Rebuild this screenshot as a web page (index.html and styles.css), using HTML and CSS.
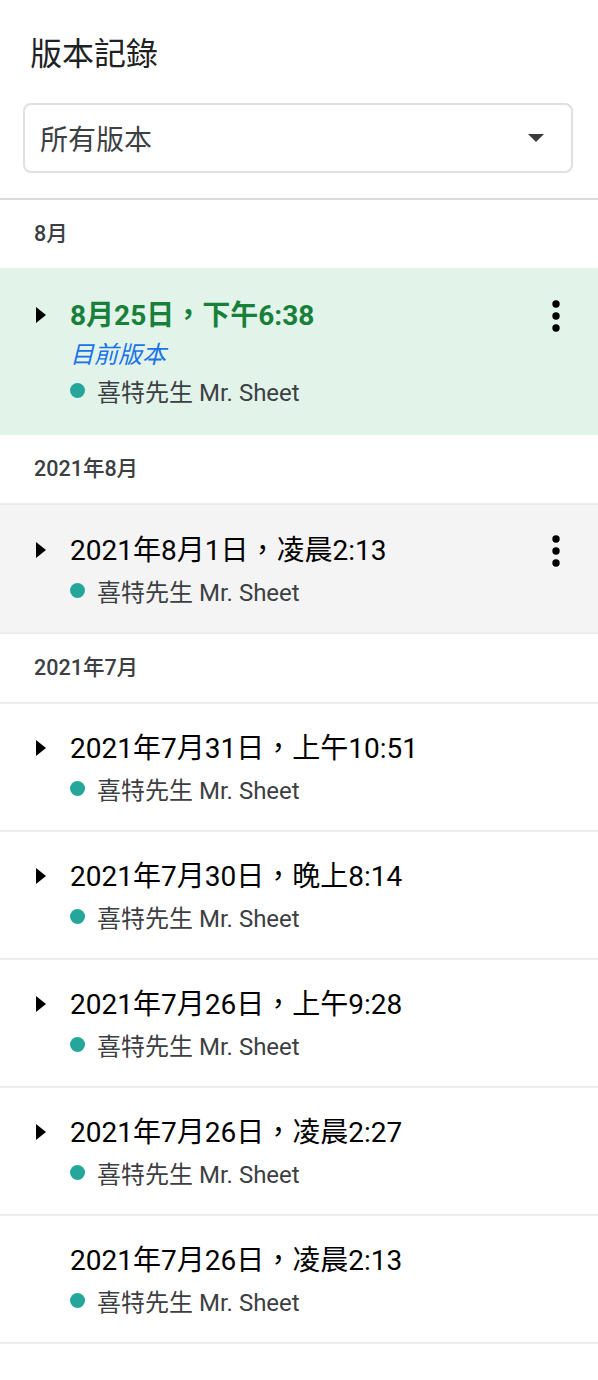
FILE: index.html
```html
<!DOCTYPE html>
<html lang="zh-Hant">
<head>
<meta charset="utf-8">
<title>版本記錄</title>
<link rel="stylesheet" href="styles.css">
</head>
<body>
<div class="panel">
  <div class="header">
    <h1 class="title">版本記錄</h1>
    <div class="select">
      <span class="select-text">所有版本</span>
      <span class="select-arrow"></span>
    </div>
  </div>
  <div class="list">
    <div class="label label-first">8月</div>
    <div class="item item-current">
      <span class="caret"></span>
      <div class="item-body">
        <div class="item-title">8月25日，下午6:38</div>
        <div class="item-sub">目前版本</div>
        <div class="item-author"><span class="dot"></span>喜特先生 Mr. Sheet</div>
      </div>
      <svg class="kebab" width="8" height="32" viewBox="0 0 8 32"><circle cx="4" cy="4" r="3.7"/><circle cx="4" cy="16" r="3.7"/><circle cx="4" cy="28" r="3.7"/></svg>
    </div>
    <div class="label">2021年8月</div>
    <div class="item item-hover">
      <span class="caret"></span>
      <div class="item-body">
        <div class="item-title">2021年8月1日，凌晨2:13</div>
        <div class="item-author"><span class="dot"></span>喜特先生 Mr. Sheet</div>
      </div>
      <svg class="kebab" width="8" height="32" viewBox="0 0 8 32"><circle cx="4" cy="4" r="3.7"/><circle cx="4" cy="16" r="3.7"/><circle cx="4" cy="28" r="3.7"/></svg>
    </div>
    <div class="label">2021年7月</div>
    <div class="item">
      <span class="caret"></span>
      <div class="item-body">
        <div class="item-title">2021年7月31日，上午10:51</div>
        <div class="item-author"><span class="dot"></span>喜特先生 Mr. Sheet</div>
      </div>
    </div>
    <div class="item">
      <span class="caret"></span>
      <div class="item-body">
        <div class="item-title">2021年7月30日，晚上8:14</div>
        <div class="item-author"><span class="dot"></span>喜特先生 Mr. Sheet</div>
      </div>
    </div>
    <div class="item">
      <span class="caret"></span>
      <div class="item-body">
        <div class="item-title">2021年7月26日，上午9:28</div>
        <div class="item-author"><span class="dot"></span>喜特先生 Mr. Sheet</div>
      </div>
    </div>
    <div class="item">
      <span class="caret"></span>
      <div class="item-body">
        <div class="item-title">2021年7月26日，凌晨2:27</div>
        <div class="item-author"><span class="dot"></span>喜特先生 Mr. Sheet</div>
      </div>
    </div>
    <div class="item">
      <span class="caret caret-hidden"></span>
      <div class="item-body">
        <div class="item-title">2021年7月26日，凌晨2:13</div>
        <div class="item-author"><span class="dot"></span>喜特先生 Mr. Sheet</div>
      </div>
    </div>
  </div>
</div>
</body>
</html>
```

FILE: styles.css
```css
* { box-sizing: border-box; }
html, body {
  margin: 0;
  padding: 0;
  background: #ffffff;
}
body {
  font-family: Roboto, "Noto Sans CJK TC", "Noto Sans", sans-serif;
  color: #202124;
}
.panel {
  width: 598px;
}
.header {
  padding-top: 32px;
}
.title {
  margin: 0;
  padding-left: 30px;
  font-size: 32px;
  font-weight: 400;
  line-height: 44px;
  color: #202124;
}
.select {
  margin: 27px 25px 0 23px;
  height: 70px;
  border: 2px solid #e0e0e0;
  border-radius: 8px;
  display: flex;
  align-items: center;
  justify-content: space-between;
  padding: 0 27px 0 15px;
}
.select-text {
  font-size: 28px;
  color: #3c4043;
}
.select-arrow {
  width: 0;
  height: 0;
  border-left: 8px solid transparent;
  border-right: 8px solid transparent;
  border-top: 8px solid #3c3c3c;
}
.list {
  margin-top: 25px;
  border-top: 2px solid #dcdcdc;
}
.label {
  height: 70px;
  line-height: 68px;
  padding-left: 34px;
  font-size: 21.5px;
  font-weight: 500;
  color: #3c4043;
  border-bottom: 2px solid #ececec;
}
.label-first {
  height: 68px;
  line-height: 68px;
  border-bottom: none;
}
.item {
  display: flex;
  align-items: flex-start;
  padding: 23px 38px 25px 36px;
  border-bottom: 2px solid #ececec;
}
.item-hover {
  background: #f4f4f4;
  padding-top: 24px;
}
.item-current {
  background: #e2f3ea;
  border-bottom: none;
  padding-top: 26px;
  padding-bottom: 28px;
}
.caret {
  flex: none;
  width: 0;
  height: 0;
  margin-top: 13px;
  margin-right: 24px;
  border-top: 8.5px solid transparent;
  border-bottom: 8.5px solid transparent;
  border-left: 10.5px solid #000000;
}
.caret-hidden {
  visibility: hidden;
}
.item-body {
  flex: 1;
  min-width: 0;
}
.item-title {
  font-size: 28px;
  line-height: 44px;
  color: #000000;
}
.item-current .item-title {
  color: #188038;
  font-weight: 700;
}
.item-sub {
  font-size: 24px;
  line-height: 35px;
  font-style: italic;
  color: #1a73e8;
}
.item-author {
  display: flex;
  align-items: center;
  height: 34px;
  font-size: 24px;
  color: #3c4043;
}
.dot {
  flex: none;
  width: 15px;
  height: 15px;
  border-radius: 50%;
  background: #26a69a;
  margin-right: 12px;
}
.kebab {
  flex: none;
  margin-top: 6px;
  fill: #000000;
}
```
